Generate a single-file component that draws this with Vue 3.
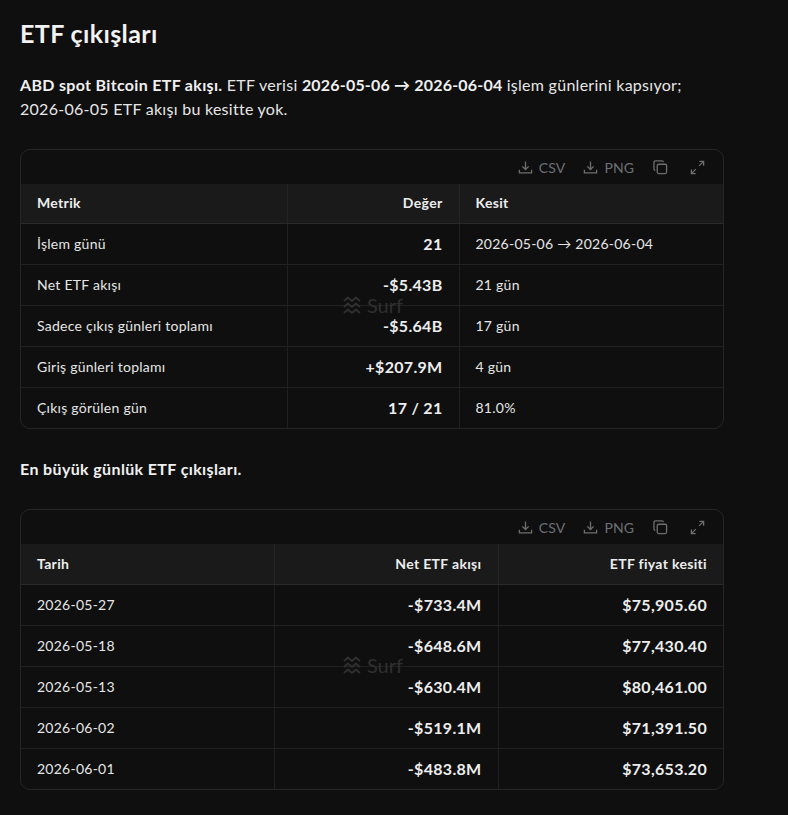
<script setup>
const metrics = [
  { name: 'İşlem günü', value: '21', range: '2026-05-06 → 2026-06-04' },
  { name: 'Net ETF akışı', value: '-$5.43B', range: '21 gün' },
  { name: 'Sadece çıkış günleri toplamı', value: '-$5.64B', range: '17 gün' },
  { name: 'Giriş günleri toplamı', value: '+$207.9M', range: '4 gün' },
  { name: 'Çıkış görülen gün', value: '17 / 21', range: '81.0%' },
]

const outflows = [
  { date: '2026-05-27', flow: '-$733.4M', price: '$75,905.60' },
  { date: '2026-05-18', flow: '-$648.6M', price: '$77,430.40' },
  { date: '2026-05-13', flow: '-$630.4M', price: '$80,461.00' },
  { date: '2026-06-02', flow: '-$519.1M', price: '$71,391.50' },
  { date: '2026-06-01', flow: '-$483.8M', price: '$73,653.20' },
]
</script>

<template>
  <div class="page">
    <h2 class="title">ETF çıkışları</h2>
    <p class="para">
      <strong>ABD spot Bitcoin ETF akışı.</strong> ETF verisi <strong class="range">2026-05-06 → 2026-06-04</strong> işlem günlerini kapsıyor; 2026-06-05 ETF akışı bu kesitte yok.
    </p>

    <div class="card">
      <div class="toolbar">
        <span class="tool"><svg class="ico" viewBox="0 0 16 16"><path d="M8 1.5v8.5M4.6 6.8 8 10.2l3.4-3.4M1.5 10.5v3.2h13v-3.2" /></svg>CSV</span>
        <span class="tool"><svg class="ico" viewBox="0 0 16 16"><path d="M8 1.5v8.5M4.6 6.8 8 10.2l3.4-3.4M1.5 10.5v3.2h13v-3.2" /></svg>PNG</span>
        <svg class="ico copy" viewBox="0 0 16 16"><rect x="4.5" y="4.5" width="10" height="10" rx="1.6" /><path d="M11 2.4A1.5 1.5 0 0 0 9.5 1h-7A1.5 1.5 0 0 0 1 2.5v7A1.5 1.5 0 0 0 2.4 11" /></svg>
        <svg class="ico" viewBox="0 0 16 16"><path d="M10 1.5h4.5V6M14.5 1.5 9.7 6.3M6 14.5H1.5V10M1.5 14.5l4.8-4.8" /></svg>
      </div>
      <div class="wrap">
        <table class="up">
          <colgroup><col class="m1" /><col class="m2" /><col /></colgroup>
          <thead>
            <tr><th>Metrik</th><th class="num">Değer</th><th>Kesit</th></tr>
          </thead>
          <tbody>
            <tr v-for="m in metrics" :key="m.name">
              <td>{{ m.name }}</td>
              <td class="num big">{{ m.value }}</td>
              <td>{{ m.range }}</td>
            </tr>
          </tbody>
        </table>
        <div class="mark">
          <svg viewBox="0 0 18 18"><path d="M1 5 5 1.500l4 3.500 4-3.500 4 3.500M1 11 5 7.500l4 3.500 4-3.500 4 3.500M1 17 5 13.500l4 3.500 4-3.500 4 3.500" /></svg>
          <span>Surf</span>
        </div>
      </div>
    </div>

    <p class="para sub"><strong>En büyük günlük ETF çıkışları.</strong></p>

    <div class="card">
      <div class="toolbar">
        <span class="tool"><svg class="ico" viewBox="0 0 16 16"><path d="M8 1.5v8.5M4.6 6.8 8 10.2l3.4-3.4M1.5 10.5v3.2h13v-3.2" /></svg>CSV</span>
        <span class="tool"><svg class="ico" viewBox="0 0 16 16"><path d="M8 1.5v8.5M4.6 6.8 8 10.2l3.4-3.4M1.5 10.5v3.2h13v-3.2" /></svg>PNG</span>
        <svg class="ico copy" viewBox="0 0 16 16"><rect x="4.5" y="4.5" width="10" height="10" rx="1.6" /><path d="M11 2.4A1.5 1.5 0 0 0 9.5 1h-7A1.5 1.5 0 0 0 1 2.5v7A1.5 1.5 0 0 0 2.4 11" /></svg>
        <svg class="ico" viewBox="0 0 16 16"><path d="M10 1.5h4.5V6M14.5 1.5 9.7 6.3M6 14.5H1.5V10M1.5 14.5l4.8-4.8" /></svg>
      </div>
      <div class="wrap">
        <table>
          <colgroup><col class="d1" /><col class="d2" /><col /></colgroup>
          <thead>
            <tr><th>Tarih</th><th class="num">Net ETF akışı</th><th class="num">ETF fiyat kesiti</th></tr>
          </thead>
          <tbody>
            <tr v-for="r in outflows" :key="r.date">
              <td>{{ r.date }}</td>
              <td class="num big">{{ r.flow }}</td>
              <td class="num big">{{ r.price }}</td>
            </tr>
          </tbody>
        </table>
        <div class="mark low">
          <svg viewBox="0 0 18 18"><path d="M1 5 5 1.500l4 3.500 4-3.500 4 3.500M1 11 5 7.500l4 3.500 4-3.500 4 3.500M1 17 5 13.500l4 3.500 4-3.500 4 3.500" /></svg>
          <span>Surf</span>
        </div>
      </div>
    </div>
  </div>
</template>

<style>
html, body {
  background: #0f0f0f;
}
</style>

<style scoped>
.page {
  width: 724px;
  height: 815px;
  box-sizing: border-box;
  padding: 18px 0 0 20px;
  font-family: Lato, "Noto Sans", sans-serif;
  color: #ededed;
  overflow: hidden;
}

.title {
  margin: 0 0 24px;
  font-size: 25px;
  line-height: 31px;
  letter-spacing: 0.38px;
  font-weight: 700;
  color: #f2f2f2;
}

.para {
  margin: 0 0 28px;
  font-size: 16px;
  line-height: 24px;
  letter-spacing: 0.27px;
  color: #e6e6e6;
}

.para strong {
  font-weight: 700;
  letter-spacing: 0.32px;
  color: #f0f0f0;
}

.para .range {
  letter-spacing: 0.19px;
}

.sub strong {
  letter-spacing: 0.37px;
}

.card {
  border: 1px solid #262626;
  border-radius: 10px;
  overflow: hidden;
  margin-bottom: 28px;
}

.toolbar {
  height: 34px;
  display: flex;
  justify-content: flex-end;
  align-items: center;
  padding-right: 18px;
  color: #6c7075;
  font-size: 14px;
  letter-spacing: 0.1px;
}

.tool {
  display: flex;
  align-items: center;
  gap: 6px;
  margin-right: 18px;
}

.ico {
  width: 15px;
  height: 15px;
  fill: none;
  stroke: #6e6e6e;
  stroke-width: 1.4;
}

.copy {
  margin: 0 22px 0 1px;
}

.wrap {
  position: relative;
}

table {
  width: 100%;
  table-layout: fixed;
  border-collapse: collapse;
}

.m1 { width: 266px; }
.m2 { width: 172px; }
.d1 { width: 253px; }
.d2 { width: 224px; }

th, td {
  box-sizing: border-box;
  padding: 0 16px;
  text-align: left;
  font-size: 14px;
  letter-spacing: 0.25px;
  border-left: 1px solid #1f1f1f;
  color: #e6e6e6;
}

th:first-child, td:first-child {
  border-left: 0;
}

th {
  height: 40px;
  font-weight: 700;
  letter-spacing: 0.33px;
  background: #1a1a1a;
  color: #ededed;
  border-bottom: 1px solid #2a2a2a;
  border-left-color: #242424;
}

td {
  height: 41px;
  border-bottom: 1px solid #212121;
}

tbody tr:last-child td {
  border-bottom: 0;
}

/* first table sits a pixel higher than the second */
.up th {
  height: 39px;
  padding-bottom: 1px;
}

.up tbody tr:last-child td {
  padding-bottom: 1px;
}

.num {
  text-align: right;
}

.big {
  font-size: 16px;
  font-weight: 700;
  letter-spacing: 0.3px;
  color: #ededed;
}

.mark {
  position: absolute;
  left: 50%;
  top: 50%;
  transform: translate(-50%, -50%);
  margin: -1px 0 0 1px;
  display: flex;
  align-items: center;
  gap: 6px;
  font-size: 20px;
  color: #2f2f2f;
  pointer-events: none;
}

.mark.low {
  margin-top: -2px;
}

.mark svg {
  width: 18px;
  height: 18px;
  fill: none;
  stroke: #2f2f2f;
  stroke-width: 2;
}
</style>
